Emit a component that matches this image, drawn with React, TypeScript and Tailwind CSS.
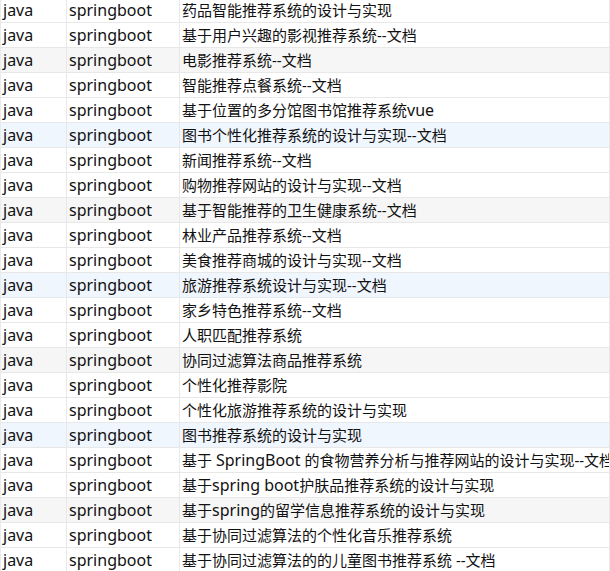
const titles = [
  "药品智能推荐系统的设计与实现",
  "基于用户兴趣的影视推荐系统--文档",
  "电影推荐系统--文档",
  "智能推荐点餐系统--文档",
  "基于位置的多分馆图书馆推荐系统vue",
  "图书个性化推荐系统的设计与实现--文档",
  "新闻推荐系统--文档",
  "购物推荐网站的设计与实现--文档",
  "基于智能推荐的卫生健康系统--文档",
  "林业产品推荐系统--文档",
  "美食推荐商城的设计与实现--文档",
  "旅游推荐系统设计与实现--文档",
  "家乡特色推荐系统--文档",
  "人职匹配推荐系统",
  "协同过滤算法商品推荐系统",
  "个性化推荐影院",
  "个性化旅游推荐系统的设计与实现",
  "图书推荐系统的设计与实现",
  "基于 SpringBoot 的食物营养分析与推荐网站的设计与实现--文档",
  "基于spring boot护肤品推荐系统的设计与实现",
  "基于spring的留学信息推荐系统的设计与实现",
  "基于协同过滤算法的个性化音乐推荐系统",
  "基于协同过滤算法的的儿童图书推荐系统 --文档",
];

const rowBg = (i: number) => {
  if (i % 3 !== 2) return "bg-white";
  return i % 6 === 5 ? "bg-[#f0f6fd]" : "bg-[#f6f6f6]";
};

// latin runs render a touch bigger than the CJK ones
const Title = ({ text }: { text: string }) => (
  <>
    {text.split(/([A-Za-z]+(?: [A-Za-z]+)*)/).map((part, j) =>
      /[A-Za-z]/.test(part) ? (
        <span key={j} className="text-[16px]">
          {part}
        </span>
      ) : (
        <span key={j}>{part}</span>
      )
    )}
  </>
);

const cell =
  "flex items-center overflow-hidden whitespace-pre border-r border-[#e8e8e8] pl-[2px]";

export default function App() {
  return (
    <div className="h-[571px] w-[610px] overflow-hidden bg-white">
      <div
        className="-mt-[2px] border-l border-[#ebebeb] text-[15px] text-[#111]"
        style={{ fontFamily: '"Noto Sans", "Noto Sans CJK SC", sans-serif' }}
      >
        {titles.map((t, i) => (
          <div
            key={i}
            className={`grid h-[25px] grid-cols-[66px_113px_430px] border-b border-[#e8e8e8] ${rowBg(i)}`}
          >
            <div className={`${cell} text-[16px]`}>java</div>
            <div className={`${cell} text-[16px]`}>springboot</div>
            <div className={cell}>
              <Title text={t} />
            </div>
          </div>
        ))}
      </div>
    </div>
  );
}
